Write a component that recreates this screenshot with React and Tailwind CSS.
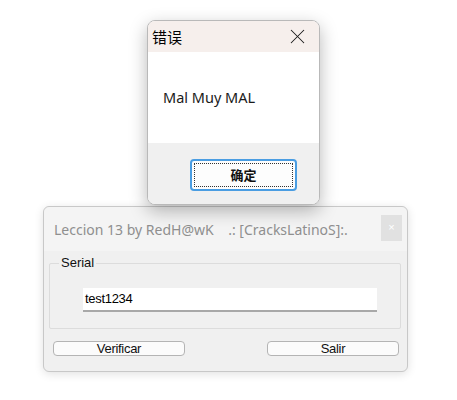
import { X } from 'lucide-react';

const ui = { fontFamily: '"Noto Sans", "Open Sans", sans-serif' };
const classic = { fontFamily: '"Liberation Sans", Arial, sans-serif' };
const cjk = { fontFamily: '"Noto Sans CJK SC", "Noto Sans", sans-serif' };

function ErrorDialog() {
  return (
    <div className="relative z-10 ml-[147px] w-[173px] h-[185px] flex flex-col rounded-[8px] overflow-hidden border border-[#b9b9b9] bg-white shadow-[0_6px_18px_rgba(0,0,0,0.28)]">
      {/* title */}
      <div className="h-[31px] bg-[#f6efec] flex items-center justify-between pl-[4px] pr-[9px]">
        <span className="text-[15px] text-black leading-none" style={cjk}>错误</span>
        <X className="w-[25px] h-[25px] text-[#1a1a1a]" strokeWidth={1} />
      </div>
      {/* message */}
      <div className="h-[91px] flex items-center pl-[15px]">
        <span className="text-[14.5px] text-[#1a1a1a]" style={ui}>Mal Muy MAL</span>
      </div>
      {/* footer */}
      <div className="flex-1 bg-[#f0f0f0] pt-[16px] pl-[42px]">
        <div className="w-[107px] h-[32px] rounded-[4px] border-2 border-[#4a9de2] bg-[#fdfdfd] p-[2px]">
          <div className="w-full h-full border border-dotted border-[#333] flex items-center justify-center">
            <span className="text-[13px] text-[#111] font-semibold" style={cjk}>确定</span>
          </div>
        </div>
      </div>
    </div>
  );
}

function MainWindow() {
  return (
    <div className="mt-[1px] ml-[43px] w-[365px] h-[166px] flex flex-col rounded-[6px] border border-[#c8c8c8] bg-[#f0f0f0] shadow-[0_2px_10px_rgba(0,0,0,0.12)]">
      {/* title bar */}
      <div className="h-[44px] flex items-center justify-between pl-[10px] pr-[5px] bg-[#f4f4f4] rounded-t-[6px]">
        <span className="text-[14px] text-[#8f8f8f] whitespace-pre" style={ui}>
          Leccion 13 by RedH@wK    .: [CracksLatinoS]:.
        </span>
        <div className="w-[21px] h-[26px] bg-[#e1e1e1] flex items-center justify-center -mt-[3px]">
          <span className="text-[11px] text-white leading-none" style={classic}>×</span>
        </div>
      </div>
      {/* body */}
      <div className="flex-1 px-[4px] pt-[12px]">
        <div className="relative ml-[1px] w-[352px] h-[66px] border border-[#dcdcdc] rounded-[2px]">
          <span className="absolute -top-[9px] left-[9px] px-[2px] bg-[#f0f0f0] text-[13px] text-[#111] leading-[16px]" style={classic}>
            Serial
          </span>
          <div className="mt-[24px] ml-[33px] w-[294px] h-[24px] bg-white border-b-2 border-[#a8a8a8] flex items-center pl-[2px]">
            <span className="text-[13px] text-black tracking-[-0.3px]" style={classic}>test1234</span>
          </div>
        </div>
        <div className="mt-[12px] flex justify-between pl-[5px] pr-[4px]">
          <div className="w-[132px] h-[15px] rounded-[4px] border border-[#b4b4b4] bg-[#fbfbfb] flex items-center justify-center">
            <span className="text-[13px] text-[#111] leading-none tracking-[-0.3px]" style={classic}>Verificar</span>
          </div>
          <div className="w-[132px] h-[15px] rounded-[4px] border border-[#b4b4b4] bg-[#fbfbfb] flex items-center justify-center">
            <span className="text-[13px] text-[#111] leading-none tracking-[-0.3px]" style={classic}>Salir</span>
          </div>
        </div>
      </div>
    </div>
  );
}

export default function App() {
  return (
    <div className="w-[457px] h-[400px] bg-white pt-[20px] flex flex-col">
      <ErrorDialog />
      <MainWindow />
    </div>
  );
}
